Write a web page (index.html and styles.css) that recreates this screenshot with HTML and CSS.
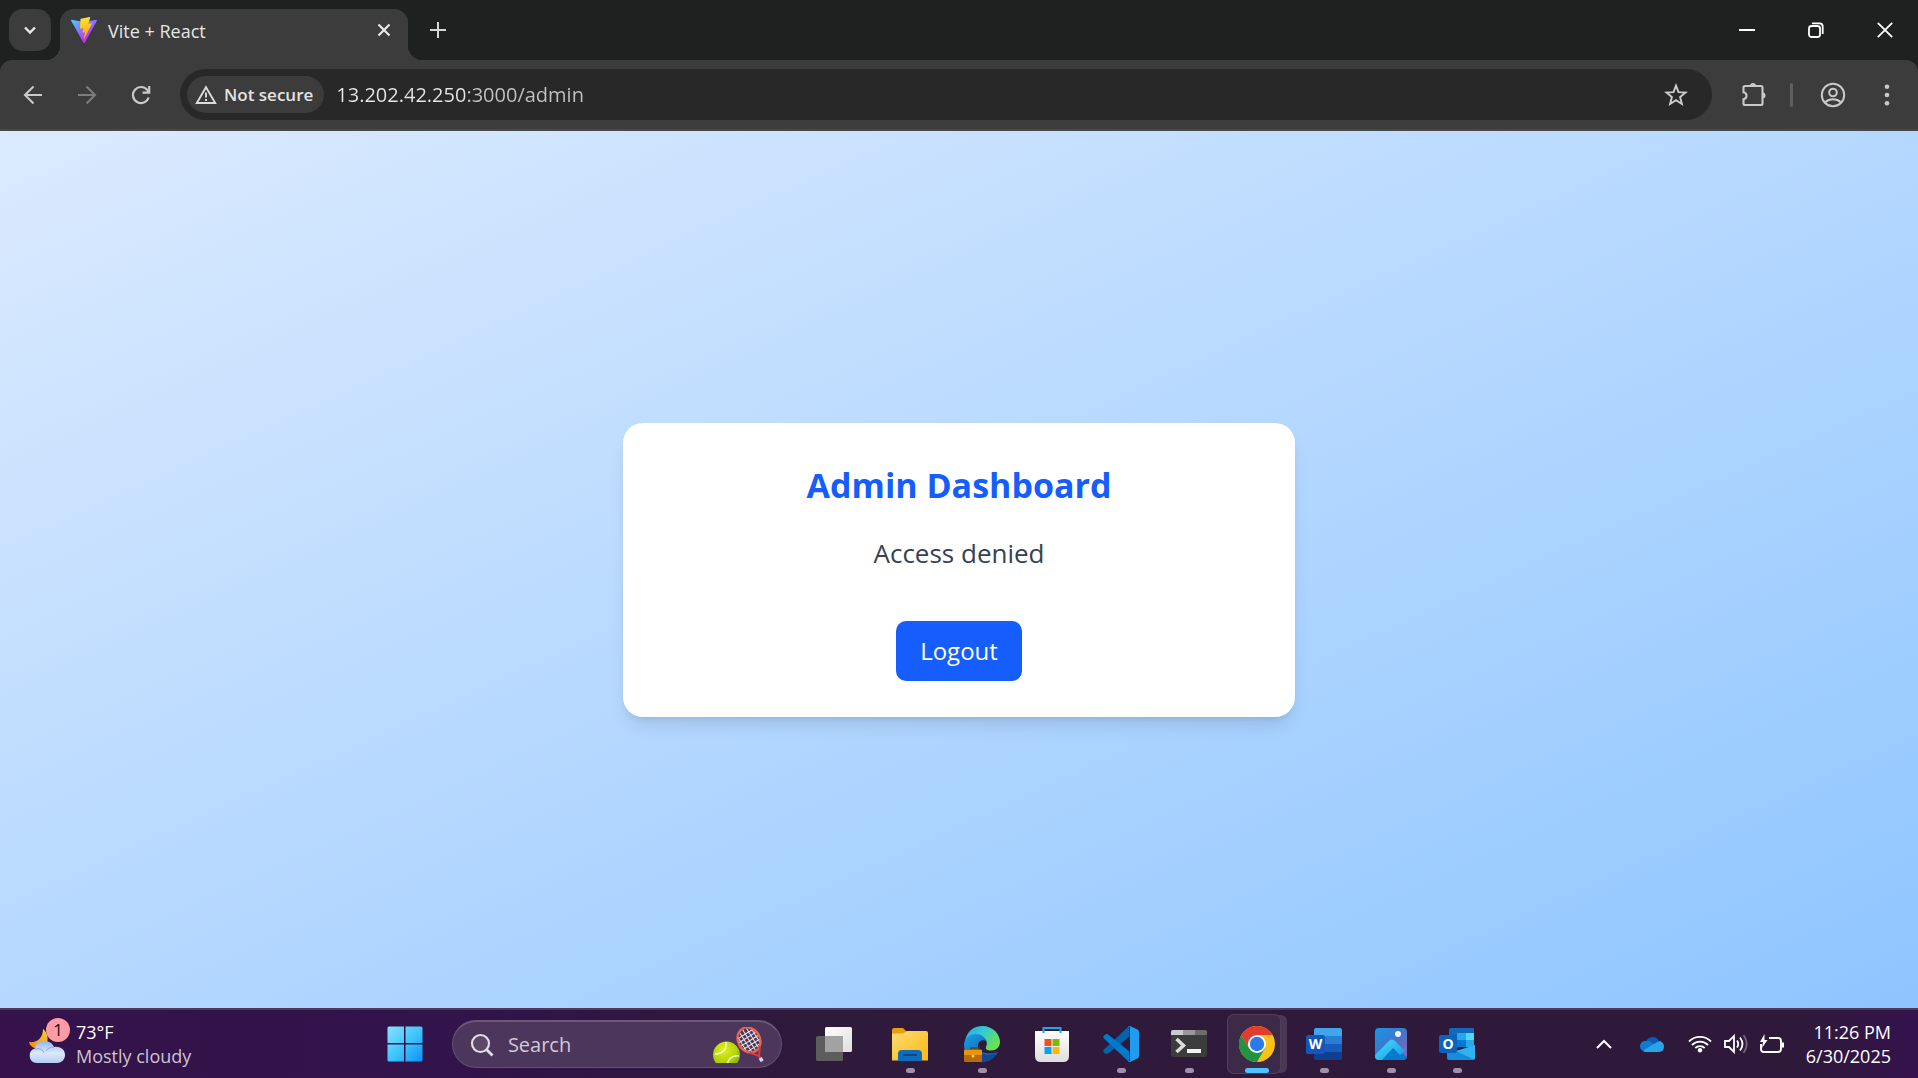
FILE: index.html
```html
<!DOCTYPE html>
<html lang="en">
<head>
<meta charset="utf-8">
<meta name="viewport" content="width=device-width, initial-scale=1">
<title>Vite + React</title>
<link rel="stylesheet" href="styles.css">
</head>
<body>
<div class="desktop">
  <header class="browser">
    <div class="tab-strip">
      <button class="tab-search" aria-label="Search tabs">
        <svg width="16" height="16" viewBox="0 0 16 16" fill="none" stroke="#e8e8e8" stroke-width="2.4"><path d="M3 5.500l5 5 5-5"/></svg>
      </button>
      <div class="tab">
        <svg class="favicon" width="26" height="28" viewBox="0 0 256 257">
          <defs>
            <linearGradient id="vite-a" x1="0" x2="0.6" y1="0" y2="0.8"><stop offset="0" stop-color="#41d1ff"/><stop offset="1" stop-color="#bd34fe"/></linearGradient>
            <linearGradient id="vite-b" x1="0.43" x2="0.5" y1="0.02" y2="0.9"><stop offset="0" stop-color="#ffea83"/><stop offset=".08" stop-color="#ffdd35"/><stop offset="1" stop-color="#ffa800"/></linearGradient>
          </defs>
          <path fill="url(#vite-a)" d="M255.200 37.900L134.900 252.900c-2.500 4.400-8.800 4.500-11.300.1L.9 37.900c-2.700-4.800 1.400-10.600 6.800-9.600l120.400 21.500c.8.100 1.500.1 2.300 0L248.300 28.300c5.400-1 9.600 4.800 6.900 9.600Z"/>
          <path fill="url(#vite-b)" d="M185.400.100L96.400 17.500c-1.500.3-2.500 1.500-2.600 3l-5.500 92.500c-.1 2.200 1.900 3.900 4 3.400l24.800-5.700c2.300-.5 4.400 1.500 3.900 3.800l-7.400 36.100c-.5 2.400 1.800 4.500 4.200 3.800l15.300-4.600c2.400-.7 4.600 1.400 4.200 3.800l-11.700 56.700c-.7 3.500 4 5.500 5.900 2.500l1.300-2L205.500 65.800c1.200-2.400-.9-5.200-3.600-4.700l-25.500 4.900c-2.400.5-4.400-1.800-3.800-4.100l16.700-57.700c.7-2.400-1.400-4.600-3.900-4.100Z"/>
        </svg>
        <span class="tab-title">Vite + React</span>
        <button class="tab-close" aria-label="Close tab">
          <svg width="14" height="14" viewBox="0 0 14 14" stroke="#e8e8e8" stroke-width="2.200"><path d="M1.500 1.500l11 11M12.500 1.500l-11 11"/></svg>
        </button>
      </div>
      <button class="new-tab" aria-label="New tab">
        <svg width="16" height="16" viewBox="0 0 16 16" stroke="#d6d6d6" stroke-width="2"><path d="M8 0v16M0 8h16"/></svg>
      </button>
      <div class="window-controls">
        <button aria-label="Minimize"><svg width="16" height="16" viewBox="0 0 16 16"><path d="M0 7h16v2H0z" fill="#fff"/></svg></button>
        <button aria-label="Restore"><svg width="16" height="16" viewBox="0 0 16 16" fill="none" stroke="#fff" stroke-width="1.800"><rect x="1" y="4" width="11" height="11" rx="2.500"/><path d="M4 1.300h7.500a3.200 3.200 0 0 1 3.200 3.200V12"/></svg></button>
        <button aria-label="Close window"><svg width="16" height="16" viewBox="0 0 16 16" stroke="#fff" stroke-width="1.800"><path d="M.8.800l14.400 14.400M15.200.800L.8 15.200"/></svg></button>
      </div>
    </div>

    <div class="toolbar">
      <nav class="nav-buttons" aria-label="Browser navigation">
        <button aria-label="Back"><svg width="20" height="20" viewBox="0 0 20 20" fill="none" stroke="#c9c9c9" stroke-width="2.100"><path d="M19 10H2.500M10.500 1.500L2 10l8.500 8.500"/></svg></button>
        <button aria-label="Forward"><svg width="20" height="20" viewBox="0 0 20 20" fill="none" stroke="#7c7c7c" stroke-width="2.100"><path d="M1 10h16.500M9.500 1.500L18 10l-8.500 8.500"/></svg></button>
        <button aria-label="Reload"><svg width="20" height="20" viewBox="0 0 20 20" fill="none" stroke="#c9c9c9" stroke-width="2.200"><path d="M17.600 12.500a8 8 0 1 1-1.200-7.300L18 7"/><path d="M18.200 1v6.700h-6.700"/></svg></button>
      </nav>
      <div class="omnibox">
        <button class="site-info">
          <svg width="22" height="20" viewBox="0 0 22 20" fill="none" stroke="#dcdcdc" stroke-width="1.900"><path d="M11 2.200L20.200 18H1.800z"/><path d="M11 7.500v5M11 14v2"/></svg>
          <span>Not secure</span>
        </button>
        <input class="address" type="text" aria-label="Address" value="13.202.42.250:3000/admin">
        <button class="bookmark" aria-label="Bookmark this page">
          <svg width="24" height="24" viewBox="0 0 24 24" fill="none" stroke="#cdcdcd" stroke-width="1.900"><path d="M12 2.600l2.500 6.600 7 .4-5.400 4.500 1.800 6.900L12 17.200l-5.900 3.800 1.800-6.900L2.500 9.600l7-.4z"/></svg>
        </button>
      </div>
      <div class="toolbar-actions">
        <button aria-label="Extensions">
          <svg width="26" height="26" viewBox="0 0 26 26"><path d="M2.500 5.500Q2.500 4 4 4H20Q21.500 4 21.500 5.500V21.500Q21.500 23 20 23H4Q2.500 23 2.500 21.500V17.200C6.500 16.500 6.500 11 2.500 10.300Z" fill="none" stroke="#c9c9c9" stroke-width="2.100"/><path d="M9 4a3 3 0 0 1 6 0zM21.500 10.500a3 3 0 0 1 0 6z" fill="#c9c9c9"/></svg>
        </button>
        <span class="divider"></span>
        <button aria-label="Profile">
          <svg width="26" height="26" viewBox="0 0 26 26" fill="none" stroke="#c9c9c9" stroke-width="2"><circle cx="13" cy="13" r="11.200"/><circle cx="13" cy="10.500" r="3.800"/><path d="M5.300 20.300c4-4 11.400-4 15.400 0"/></svg>
        </button>
        <button aria-label="Menu">
          <svg width="26" height="26" viewBox="0 0 26 26" fill="#c9c9c9"><circle cx="13" cy="4.800" r="2.300"/><circle cx="13" cy="13" r="2.300"/><circle cx="13" cy="21.200" r="2.300"/></svg>
        </button>
      </div>
    </div>
  </header>

  <main class="page">
    <section class="card">
      <h1>Admin Dashboard</h1>
      <p>Access denied</p>
      <button class="logout">Logout</button>
    </section>
  </main>

  <footer class="taskbar">
    <button class="weather">
      <span class="weather-icon">
        <svg width="38" height="36" viewBox="0 0 38 36">
          <defs>
            <linearGradient id="cloud" x1="0" y1="0" x2="0" y2="1"><stop offset="0" stop-color="#8db4f4"/><stop offset=".55" stop-color="#dce9fb"/><stop offset="1" stop-color="#b3cdf6"/></linearGradient>
            <linearGradient id="moon" x1="0" y1="1" x2="1" y2="0"><stop offset="0" stop-color="#f08a17"/><stop offset="1" stop-color="#f9cf3a"/></linearGradient>
          </defs>
          <path d="M15 0c6 4 7 17-2 19C6 21 2 17 1 13c8 1 14-4 14-13z" fill="url(#moon)"/>
          <path d="M8 34a7.500 7.500 0 0 1-1-14.600C8 14 13 11 18 12c4 .6 7 3 8 6 7-1 11 3 11 8s-4 8-8 8z" fill="url(#cloud)"/>
          <path d="M7 20c5-1 8 1 9 4M26 18c-4 0-7 2-8 4" fill="none" stroke="#89abe6" stroke-width="1"/>
        </svg>
        <span class="badge">1</span>
      </span>
      <span class="weather-text"><span>73°F</span><span class="muted">Mostly cloudy</span></span>
    </button>

    <div class="apps">
      <button class="app" aria-label="Start">
        <svg width="36" height="36" viewBox="0 0 36 36"><defs><linearGradient id="win" gradientUnits="userSpaceOnUse" x1="0" y1="0" x2="36" y2="36"><stop offset="0" stop-color="#8ce2fc"/><stop offset=".5" stop-color="#40c6fb"/><stop offset="1" stop-color="#0a90f8"/></linearGradient></defs><path fill="url(#win)" d="M2 .500H17V17H.500V2Q.500.500 2 .500zM18.500.500H34Q35.500.500 35.500 2V17h-17zM.500 18.500H17v17H2Q.500 35.500.500 34zM18.500 18.500h17V34q0 1.500-1.500 1.500H18.500z"/></svg>
      </button>
      <label class="search">
        <svg width="24" height="24" viewBox="0 0 24 24" fill="none" stroke="#e2dce5"><circle cx="10.500" cy="10.500" r="8.500" stroke-width="2.200" fill="#ffffff18"/><path d="M16.500 16.500l6 6" stroke-width="2.800"/></svg>
        <input type="text" placeholder="Search" aria-label="Search">
        <svg width="56" height="36" viewBox="0 0 56 36">
          <defs><radialGradient id="ball" cx=".4" cy=".3" r=".8"><stop offset="0" stop-color="#e2f01a"/><stop offset=".6" stop-color="#b0d10a"/><stop offset="1" stop-color="#6f9404"/></radialGradient><clipPath id="cut"><path d="M0 0h56v36H0z"/></clipPath></defs>
          <g clip-path="url(#cut)"><circle cx="14.500" cy="28" r="13.500" fill="url(#ball)"/><path d="M3 27c6 0 12-3 11-12M15 41c0-9 5-13 12-12" fill="none" stroke="#f4f7d4" stroke-width="1.500"/></g>
          <g transform="translate(1 0) rotate(-32 36 13)"><ellipse cx="36" cy="13" rx="11" ry="13" fill="#4b3952"/><path d="M28 5v16M32 1v24M36 1v24M40 2v22M44 5v16M27 6h18M25 10h22M25 14h22M26 18h20M29 22h14" stroke="#eee6ef" stroke-width="1"/><ellipse cx="36" cy="13" rx="11" ry="13" fill="none" stroke="#ee6451" stroke-width="2.200"/><path d="M30 24l6 8 6-8M36 31v5" fill="none" stroke="#dc3a3b" stroke-width="2"/><path d="M36 34v4" stroke="#d8d1ec" stroke-width="3.500"/></g>
        </svg>
      </label>
      <button class="app" aria-label="Task view">
        <svg width="36" height="36" viewBox="0 0 36 36"><defs><linearGradient id="tv" x1="0" y1="0" x2="1" y2="1"><stop offset="0" stop-color="#fff"/><stop offset="1" stop-color="#dedede"/></linearGradient></defs><rect x="9" y="1" width="27" height="25" rx="1.500" fill="url(#tv)"/><rect y="10" width="27" height="25" rx="1.500" fill="#5d5d5d"/><path d="M9 10h18v16H9z" fill="#a2a2a2"/></svg>
      </button>
      <button class="app running" aria-label="File Explorer">
        <svg width="36" height="36" viewBox="0 0 36 36"><defs><linearGradient id="fold" x1="0" y1="0" x2="1" y2="1"><stop offset="0" stop-color="#ffdc70"/><stop offset="1" stop-color="#fcb716"/></linearGradient></defs><path d="M0 4q0-2 2-2h9l4 4v8H0z" fill="#e3a008"/><path d="M0 7.500h11l4-2.500h19q2 0 2 2v27.500H0z" fill="url(#fold)"/><path d="M6 35V28q0-4 4-4h16q4 0 4 4v7z" fill="#0f6cbd"/><path d="M11 29h14" stroke="#0a4a80" stroke-width="2"/></svg>
      </button>
      <button class="app running" aria-label="Microsoft Edge">
        <svg width="36" height="36" viewBox="0 0 36 36"><defs><linearGradient id="e1" x1="0" y1="0" x2="1" y2=".6"><stop offset="0" stop-color="#20a5dc"/><stop offset=".45" stop-color="#31c9d6"/><stop offset="1" stop-color="#6be34c"/></linearGradient><linearGradient id="e2" x1="0" y1="0" x2="1" y2="1"><stop offset="0" stop-color="#1b9fe5"/><stop offset="1" stop-color="#0a4ba0"/></linearGradient></defs>
        <path d="M1 15C3 5 10 0 18 0c11 0 18 8 18 16 0 5-4 8.500-9 8.500-4 0-6-1.500-5-3.500 3-6-2-12-9-11C7 10.500 3 12 1 15z" fill="url(#e1)"/><path d="M0 19c0-7 6-11 12-11 5 0 9 3 10 7-4-2-8 0-8 5 0 6 7 9 20 6-3 6-9 10-16 10C7 36 0 29 0 19z" fill="url(#e2)"/><path d="M14 22c1 6 9 9 19 5-3 6-9 9-15 9-3-4-5-8-4-14z" fill="#124a91"/><path d="M7 24v-2h8v2" fill="none" stroke="#61400e" stroke-width="1.500"/><rect y="23.500" width="18" height="12.500" rx="1" fill="#bb690b"/><path d="M0 24h18v5H0z" fill="#ea940d"/><circle cx="9" cy="30" r="1.500" fill="#ffdc54"/></svg>
      </button>
      <button class="app" aria-label="Microsoft Store">
        <svg width="36" height="36" viewBox="0 0 36 36"><defs><linearGradient id="store" x1="0" y1="0" x2="0" y2="1"><stop offset="0" stop-color="#fff"/><stop offset="1" stop-color="#dedede"/></linearGradient></defs><path d="M1 5h34v25q0 6-6 6H7q-6 0-6-6z" fill="url(#store)"/><path d="M9.500 7V2h17v5" fill="none" stroke="#1fa9e8" stroke-width="2"/><path d="M10.500 13h7v7h-7z" fill="#f25022"/><path d="M18.500 13h7v7h-7z" fill="#7fba00"/><path d="M10.500 21h7v7h-7z" fill="#00a4ef"/><path d="M18.500 21h7v7h-7z" fill="#ffb900"/></svg>
      </button>
      <button class="app running" aria-label="Visual Studio Code">
        <svg width="36" height="36" viewBox="0 0 36 36"><path d="M1 23.500q-1.500 1.500 0 3l1.500 1.200q1 .8 2.200 0L26 11V0z" fill="#0065a9"/><path d="M1 12.500q-1.500-1.500 0-3l1.500-1.200q1-.8 2.200 0L26 25v11z" fill="#007acc"/><path d="M25.500 35.700q1 .5 2 0l7-3.300q1.500-.8 1.500-2.400V6q0-1.600-1.500-2.400l-7-3.300q-1.500-.6-2.500.5 2-1 2 1.200v32q0 2-2 1.300z" fill="#1f9cf0"/></svg>
      </button>
      <button class="app running" aria-label="Terminal">
        <svg width="36" height="36" viewBox="0 0 36 36"><rect y="4" width="36" height="27" rx="2" fill="#3c3c3c"/><path d="M2 4h10v5H0V6q0-2 2-2z" fill="#ccc"/><path d="M12 4h12v5H12z" fill="#999"/><path d="M24 4h10q2 0 2 2v3H24z" fill="#6d6d6d"/><path d="M5.500 13l7 6.500-7 6.500" fill="none" stroke="#ddd" stroke-width="3.500"/><path d="M16 23h14v4H16z" fill="#f4f4f4"/></svg>
      </button>
      <button class="app running active" aria-label="Google Chrome">
        <svg width="36" height="36" viewBox="0 0 36 36"><circle cx="18" cy="18" r="18" fill="#fbc116"/><path d="M18 18V9h15.600A18 18 0 0 0 2.400 9z" fill="#e33b2e"/><path d="M2.400 9A18 18 0 0 0 18 36l7.800-13.500L18 18l-7.800 4.500z" fill="#229342"/><path d="M2.400 9h15.600L10.200 22.500z" fill="#e33b2e"/><circle cx="18" cy="18" r="9" fill="#fff"/><circle cx="18" cy="18" r="7.200" fill="#2b7aea"/></svg>
      </button>
      <button class="app running" aria-label="Word">
        <svg width="36" height="36" viewBox="0 0 36 36"><path d="M10 2h24q2 0 2 2v6H8V4q0-2 2-2z" fill="#41a5ee"/><path d="M8 10h28v8H8z" fill="#2b7cd3"/><path d="M8 18h28v8H8z" fill="#185abd"/><path d="M8 26h28v6q0 2-2 2H10q-2 0-2-2z" fill="#103f91"/><rect y="9" width="19" height="19" rx="2" fill="#1557b8"/><text x="9.500" y="23" text-anchor="middle" class="glyph">W</text></svg>
      </button>
      <button class="app running" aria-label="Photos">
        <svg width="36" height="36" viewBox="0 0 36 36"><defs><linearGradient id="ph" x1="0" y1="0" x2="1" y2="1"><stop offset="0" stop-color="#1398e9"/><stop offset=".5" stop-color="#4275c8"/><stop offset="1" stop-color="#9961bd"/></linearGradient><linearGradient id="hill" x1="0" y1="0" x2="1" y2="1"><stop offset="0" stop-color="#4be0ff"/><stop offset="1" stop-color="#1296e2"/></linearGradient></defs><rect x="2" y="2" width="32" height="32" rx="4" fill="url(#ph)"/><path d="M6 33L20 19l14 12q-1 3-4 3H8z" fill="#057bd0"/><path d="M3 28l13-13q3-3 6 0l10 10-5 4-7-7L9 34H6q-4 0-4-4z" fill="url(#hill)"/><circle cx="25" cy="8" r="3" fill="#f0f3fb"/></svg>
      </button>
      <button class="app running" aria-label="Outlook">
        <svg width="36" height="36" viewBox="0 0 36 36"><path d="M12 2h22q1 0 1 1v17H10V4q0-2 2-2z" fill="#0f6abb"/><path d="M18 7h9v7h-9z" fill="#28a8ea"/><path d="M27 7h8v7h-8z" fill="#50d9ff"/><path d="M18 14h9v7h-9z" fill="#0078d4"/><path d="M27 14h8v7h-8z" fill="#28a8ea"/><path d="M8 20l14 6 14-7v13q0 2-2 2H10q-2 0-2-2z" fill="#168ddc"/><path d="M36 19v13q0 1-1 1.500L17 25z" fill="#32b1f0"/><rect y="9" width="18" height="18" rx="2" fill="#0c63bd"/><text x="9" y="23" text-anchor="middle" class="glyph">O</text></svg>
      </button>
    </div>

    <div class="tray">
      <button aria-label="Show hidden icons"><svg width="16" height="10" viewBox="0 0 16 10" fill="none" stroke="#fff" stroke-width="2"><path d="M1 9l7-7 7 7"/></svg></button>
      <button class="onedrive" aria-label="OneDrive"><svg width="24" height="16" viewBox="0 0 24 16"><path d="M6 6a7 7 0 0 1 13-1l-5 6z" fill="#0a5db4"/><path d="M5 15.500A5.200 5.200 0 0 1 5.500 5q4-1 7 2l6 3-8 6z" fill="#1279d0"/><path d="M3 14.500L15 7.500q2-2 5-2.500 4 1.500 4 5.500 0 5-5 5.500H6q-2 0-3-1.500z" fill="#28a5ea"/></svg></button>
      <button class="quick" aria-label="Network, volume and battery">
        <svg width="24" height="18" viewBox="0 0 24 18" fill="none" stroke="#fff" stroke-width="1.800"><path d="M1 6.500a15.500 15.500 0 0 1 22 0M4 10a11.300 11.300 0 0 1 16 0M7.300 13a6.600 6.600 0 0 1 9.400 0"/><circle cx="12" cy="15.300" r="2.200" fill="#fff" stroke="none"/></svg>
        <svg width="24" height="20" viewBox="0 0 24 20" fill="none" stroke="#fff" stroke-width="1.800"><path d="M1 7h4l5-5v16l-5-5H1zM13 6.500q2.500 3.500 0 7M16 3.500q5 6.500 0 13"/><path d="M19.500 1q6.500 9 0 18" stroke="#75647c"/></svg>
        <svg width="24" height="20" viewBox="0 0 24 20" fill="none" stroke="#fff" stroke-width="1.900"><path d="M9 4h9q3 0 3 3v8q0 3-3 3H4q-3 0-3-3v-5"/><path d="M21.500 8.500H24v5h-2.500zM4.500 0L0 8h3l-1 6 5.500-8H4.500z" fill="#fff" stroke="none"/></svg>
      </button>
      <button class="clock"><time datetime="2025-06-30T23:26"><span>11:26 PM</span><span>6/30/2025</span></time></button>
    </div>
  </footer>
</div>
</body>
</html>
```
FILE: styles.css
```css
* { box-sizing: border-box; }

body {
  margin: 0;
  font-family: "Open Sans", "Noto Sans", sans-serif;
}

button {
  display: flex;
  align-items: center;
  justify-content: center;
  padding: 0;
  border: 0;
  background: none;
  color: inherit;
  font: inherit;
}

input {
  min-width: 0;
  padding: 0;
  border: 0;
  outline: 0;
  background: none;
  font: inherit;
}

svg { display: block; flex: none; }

.desktop {
  display: flex;
  flex-direction: column;
  min-height: 100vh;
}

/* Browser window */
.browser { background: #1f2120; }

.tab-strip {
  display: flex;
  align-items: flex-start;
  height: 60px;
  padding: 9px 6px 0 9px;
}

.tab-search {
  width: 42px;
  height: 42px;
  margin-right: 9px;
  border-radius: 14px;
  background: #3c3c3c;
}

.tab {
  position: relative;
  display: flex;
  align-items: center;
  width: 348px;
  height: 51px;
  padding: 0 16px 9px 11px;
  border-radius: 14px 14px 0 0;
  background: #3c3c3c;
  color: #e6e6e6;
}

.tab::before,
.tab::after {
  content: "";
  position: absolute;
  bottom: 0;
  width: 14px;
  height: 14px;
}

.tab::before {
  right: 100%;
  background: radial-gradient(circle at 0 0, transparent 14px, #3c3c3c 14px);
}

.tab::after {
  left: 100%;
  background: radial-gradient(circle at 100% 0, transparent 14px, #3c3c3c 14px);
}

.tab-title {
  flex: 1;
  margin-left: 11px;
  padding-top: 2px;
  font-size: 18px;
  line-height: 24px;
}

.tab-close { width: 16px; height: 24px; }

.new-tab {
  width: 42px;
  height: 42px;
  margin-left: 9px;
}

.window-controls {
  display: flex;
  gap: 15px;
  margin-left: auto;
}

.window-controls button { width: 54px; height: 42px; }

.toolbar {
  display: flex;
  align-items: center;
  height: 71px;
  padding: 0 9px 0 11px;
  border-bottom: 2px solid #484848;
  border-radius: 12px 12px 0 0;
  background: #3c3c3c;
}

.nav-buttons {
  display: flex;
  gap: 10px;
  margin-right: 17px;
}

.nav-buttons button { width: 44px; height: 44px; }

.omnibox {
  display: flex;
  flex: 1;
  align-items: center;
  height: 51px;
  padding: 0 24px 0 7px;
  border-radius: 26px;
  background: #282828;
}

.site-info {
  gap: 7px;
  height: 37px;
  padding: 0 11px 0 8px;
  border-radius: 19px;
  background: #3c3c3c;
  color: #e3e3e3;
  font-size: 17px;
  font-weight: 600;
}

/* The host is brighter than the port and path */
.address {
  flex: 1;
  height: 32px;
  margin-left: 12px;
  background: linear-gradient(90deg, #e8e8e8 129px, #c4c4c4 129px);
  background-clip: text;
  color: transparent;
  font-size: 20px;
}

.toolbar-actions {
  display: flex;
  align-items: center;
  margin-left: 20px;
}

.toolbar-actions button { width: 44px; height: 44px; }
.toolbar-actions button + button { margin-left: 10px; }

.divider {
  width: 3px;
  height: 24px;
  margin: 0 18px 0 14px;
  border-radius: 2px;
  background: #5f5f5f;
}

/* Web page */
.page {
  display: flex;
  flex: 1;
  align-items: center;
  justify-content: center;
  padding: 20px;
  background: linear-gradient(to bottom right in oklab, #dbeafe, #8ec5ff);
}

.card {
  display: flex;
  flex-direction: column;
  align-items: center;
  width: 100%;
  max-width: 672px;
  padding: 40px 40px 36px;
  border-radius: 20px;
  background: #fff;
  box-shadow: 0 12px 18px -4px #0000001a, 0 5px 8px -5px #0000001a;
}

.card h1 {
  margin: 0 0 28px;
  color: #155dfc;
  font-size: 34px;
  font-weight: 700;
  line-height: 44px;
}

.card p {
  margin: 0 0 50px;
  color: #364153;
  font-size: 26px;
  line-height: 36px;
}

.logout {
  height: 60px;
  padding: 0 24px;
  border-radius: 10px;
  background: #155dfc;
  color: #fff;
  font-size: 24px;
}

/* Taskbar */
.taskbar {
  display: flex;
  align-items: center;
  justify-content: space-between;
  height: 70px;
  padding: 0 27px 0 28px;
  border-top: 2px solid #4b3a58;
  background: linear-gradient(90deg, #35124a, #32134a 24%, #2e1a3b 42%, #2e193b 94%, #35124d);
  color: #fff;
  font-size: 18px;
  line-height: 24px;
}

.weather {
  gap: 10px;
  justify-content: flex-start;
  width: 252px;
  text-align: left;
}

.weather-icon {
  position: relative;
  padding-top: 6px;
}

.badge {
  position: absolute;
  top: -5px;
  right: -4px;
  width: 24px;
  height: 24px;
  border-radius: 50%;
  background: #ff9ba5;
  color: #1c1020;
  font-size: 17px;
  text-align: center;
}

.weather-text,
.clock time {
  display: flex;
  flex-direction: column;
}

.muted { color: #cdc3d2; }

.apps {
  display: grid;
  grid-template-columns: 36px 372px 78px 74px 70px 70px 68px 68px 68px 66px 68px 64px;
  align-items: center;
}

.app {
  position: relative;
  height: 60px;
}

.running::after {
  content: "";
  position: absolute;
  bottom: 1px;
  left: calc(50% - 4px);
  width: 9px;
  height: 5px;
  border-radius: 3px;
  background: #a091a8;
}

.active::before {
  content: "";
  position: absolute;
  inset: 0 10px 0 4px;
  border: 1px solid #ffffff1a;
  border-radius: 7px;
  background: #ffffff12;
  box-shadow: 7px 0 0 -1px #4a3755;
}

.active svg { position: relative; }

.active::after {
  left: calc(50% - 12px);
  width: 24px;
  background: #4cc2ff;
}

.glyph {
  fill: #fff;
  font-size: 14px;
  font-weight: 700;
}

.search {
  display: flex;
  align-items: center;
  height: 48px;
  margin: 0 13px 0 29px;
  padding: 0 13px 0 17px;
  border: 1px solid #65506f;
  border-top: 2px solid #6d5779;
  border-radius: 24px;
  background: #4d365b;
}

.search input {
  flex: 1;
  margin-left: 14px;
  color: #fff;
  font-size: 20px;
}

.search input::placeholder { color: #d2c8d6; opacity: 1; }

.tray {
  display: flex;
  align-items: center;
}

.onedrive { margin-left: 28px; }
.quick { gap: 12px; margin-left: 24px; }

.clock {
  margin-left: 22px;
  text-align: right;
}
```
